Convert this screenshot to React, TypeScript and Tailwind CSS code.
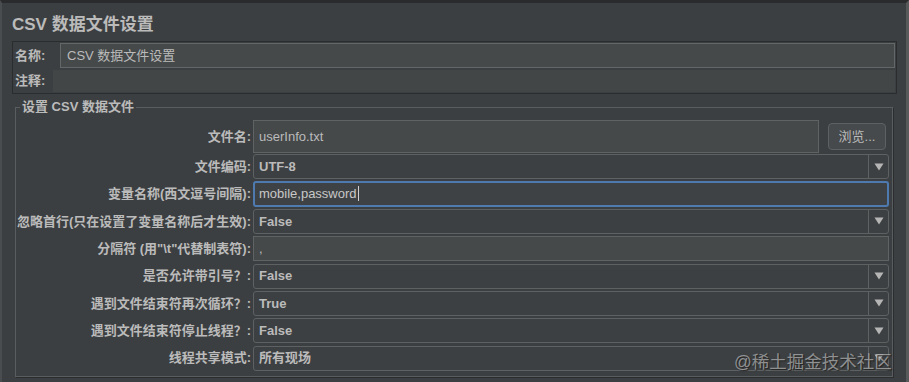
import React from 'react';

const FONT = '"Liberation Sans", "Noto Sans CJK SC", sans-serif';

interface Row {
  label: string;
  value: string;
  kind: 'combo' | 'text' | 'focus';
}

const rows: Row[] = [
  { label: '文件编码:', value: 'UTF-8', kind: 'combo' },
  { label: '变量名称(西文逗号间隔):', value: 'mobile,password', kind: 'focus' },
  { label: '忽略首行(只在设置了变量名称后才生效):', value: 'False', kind: 'combo' },
  { label: '分隔符 (用"\\t"代替制表符):', value: ',', kind: 'text' },
  { label: '是否允许带引号？:', value: 'False', kind: 'combo' },
  { label: '遇到文件结束符再次循环？:', value: 'True', kind: 'combo' },
  { label: '遇到文件结束符停止线程？:', value: 'False', kind: 'combo' },
  { label: '线程共享模式:', value: '所有现场', kind: 'combo' }
];

function Arrow() {
  return (
    <svg width="10" height="8" viewBox="0 0 10 8">
      <path d="M0.5 0.5 L9.5 0.5 L5 7.5 Z" fill="#b5b5b5" />
    </svg>
  );
}

function Field({ row }: { row: Row }) {
  if (row.kind === 'combo') {
    return (
      <div className="flex h-[25px] flex-1 items-stretch rounded-[3px] border border-[#5e6162] bg-[#3d4042]">
        <div className="flex flex-1 items-center pl-[5px] text-[13px] font-bold text-[#bbbbbb]">{row.value}</div>
        <div className="flex w-[20px] items-center justify-center border-l border-[#5e6162]">
          <Arrow />
        </div>
      </div>
    );
  }
  if (row.kind === 'focus') {
    return (
      <div className="flex h-[26px] flex-1 items-center rounded-[3px] border-2 border-[#4e7ab0] bg-[#3f4244] pl-[4px] text-[13px] text-[#c8c8c8]">
        {row.value}
        <span className="ml-[1px] inline-block h-[15px] w-[1px] bg-[#d0d0d0]" />
      </div>
    );
  }
  return (
    <div className="flex h-[25px] flex-1 items-center border border-[#606364] bg-[#45494a] pl-[5px] text-[13px] text-[#bbbbbb]">
      {row.value}
    </div>
  );
}

export default function App() {
  return (
    <div
      className="relative flex h-[382px] w-[909px] flex-col overflow-hidden border-t-[3px] border-l-[2px] border-r-[3px] border-t-[#2a2b2c] border-l-[#4a4d4f] border-r-[#58595a] bg-[#3c3f41]"
      style={{ fontFamily: FONT }}
    >
      <div className="h-[38px] pl-[10px] pt-[11px] text-[17px] font-bold leading-[22px] text-[#bbbbbb]">
        CSV 数据文件设置
      </div>

      <div className="ml-[10px] flex w-[885px] flex-col gap-[2px] border border-[#2b2c2d] p-[1px]">
        <div className="flex h-[25px] items-center">
          <div className="w-[46px] pl-[1px] text-[13px] font-bold text-[#bbbbbb]">名称:</div>
          <div className="flex h-full flex-1 items-center border border-[#646768] bg-[#45494a] pl-[6px] text-[13px] text-[#bbbbbb]">
            CSV 数据文件设置
          </div>
        </div>
        <div className="flex h-[22px] items-center">
          <div className="w-[39px] pl-[1px] text-[13px] font-bold text-[#bbbbbb]">注释:</div>
          <div className="h-full flex-1 bg-[#434647]" />
        </div>
      </div>

      <fieldset className="ml-[13px] mt-[6px] w-[878px] border border-[#5a5d5f] px-0 pb-[5px] pt-[6px] shadow-[1px_1px_0_#2c2d2e]">
        <legend className="ml-[4px] px-[2px] text-[13px] font-bold leading-[14px] text-[#bbbbbb]">设置 CSV 数据文件</legend>
        <div className="flex flex-col gap-[2.4px] pr-[3px]">
          <div className="-mb-[1.4px] flex h-[33px] items-center">
            <div className="w-[237px] pr-[2px] text-right text-[13px] font-bold text-[#bbbbbb]">文件名:</div>
            <div className="flex h-[33px] w-[566px] items-center border border-[#606364] bg-[#45494a] pl-[5px] text-[13px] text-[#bbbbbb]">
              userInfo.txt
            </div>
            <div className="ml-[9px] flex h-[27px] w-[58px] items-center justify-center rounded-[4px] border border-[#5e6162] bg-[#474a4c] text-[13px] text-[#bbbbbb]">
              浏览...
            </div>
          </div>
          {rows.map(row => (
            <div key={row.label} className="flex h-[25px] items-center">
              <div className="w-[237px] whitespace-nowrap pr-[2px] text-right text-[13px] font-bold text-[#bbbbbb]">{row.label}</div>
              <Field row={row} />
            </div>
          ))}
        </div>
      </fieldset>

      <div className="absolute left-[732px] top-[346px] text-[17.5px] text-[#cfcfcf]/60 [text-shadow:1px_1px_1px_#222]">
        @稀土掘金技术社区
      </div>
    </div>
  );
}
